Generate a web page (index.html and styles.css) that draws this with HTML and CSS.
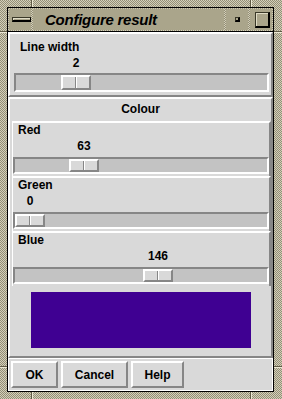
FILE: index.html
```html
<!DOCTYPE html>
<html lang="en">
<head>
  <meta charset="UTF-8">
  <title>Configure result</title>
<link rel="stylesheet" href="styles.css">
</head>
<body>
  <div class="notch notch-v" style="left:31px; top:0"></div>
  <div class="notch notch-v" style="left:250px; top:0"></div>
  <div class="notch notch-v" style="left:31px; top:392px"></div>
  <div class="notch notch-v" style="left:250px; top:392px"></div>
  <div class="notch notch-h" style="left:0; top:31px"></div>
  <div class="notch notch-h" style="left:0; top:366px"></div>
  <div class="notch notch-h notch-right" style="left:274px; top:31px"></div>
  <div class="notch notch-h notch-right" style="left:274px; top:366px"></div>

  <div class="window">
    <div class="titlebar">
      <div class="tb-btn menu-btn"><span class="menu-bar"></span></div>
      <div class="tb-title">Configure result</div>
      <div class="tb-btn min-btn"><span class="min-dot"></span></div>
      <div class="tb-btn max-btn"><span class="max-box"></span></div>
    </div>

    <div class="content">
      <div class="panel lw-panel">
        <div class="label">Line width</div>
        <div class="scale-value"><span style="margin-left:45px">2</span></div>
        <div class="trough"><div class="knob" style="margin-left:45px"></div></div>
      </div>

      <div class="panel colour-panel">
        <div class="panel-title">Colour</div>
        <div class="rows">
          <div class="row">
            <div class="label">Red</div>
            <div class="scale-value"><span style="margin-left:54px">63</span></div>
            <div class="trough"><div class="knob" style="margin-left:54px"></div></div>
          </div>
          <div class="row">
            <div class="label">Green</div>
            <div class="scale-value"><span style="margin-left:0px">0</span></div>
            <div class="trough"><div class="knob" style="margin-left:0px"></div></div>
          </div>
          <div class="row">
            <div class="label">Blue</div>
            <div class="scale-value"><span style="margin-left:128px">146</span></div>
            <div class="trough"><div class="knob" style="margin-left:128px"></div></div>
          </div>
        </div>
        <div class="swatch" style="background-color:#3f0092"></div>
      </div>

      <div class="buttons">
        <button class="btn btn-ok">OK</button>
        <button class="btn btn-cancel">Cancel</button>
        <button class="btn btn-help">Help</button>
      </div>
    </div>
  </div>
</body>
</html>
```

FILE: styles.css
```css
* {
  box-sizing: border-box;
}
html, body {
  margin: 0;
}
body {
  position: relative;
  width: 282px;
  height: 399px;
  padding: 7px 8px 7px 7px;
  background-color: #b2ad95;
  background-image: repeating-conic-gradient(#d3cfb9 0 25%, #938e76 0 50%);
  background-size: 2px 2px;
  font-family: "Liberation Sans", Arial, sans-serif;
  font-size: 12px;
  font-weight: bold;
  color: #000;
  overflow: hidden;
}

/* frame resize marks */
.notch {
  position: absolute;
}
.notch-v {
  width: 2px;
  height: 7px;
  border-left: 1px solid #5f5a45;
  border-right: 1px solid #ece8d4;
}
.notch-h {
  width: 7px;
  height: 2px;
  border-top: 1px solid #5f5a45;
  border-bottom: 1px solid #ece8d4;
}
.notch-right {
  width: 8px;
}

.window {
  height: 385px;
  border: 1px solid #000;
  display: flex;
  flex-direction: column;
}

/* title bar */
.titlebar {
  display: flex;
  gap: 2px;
  height: 24px;
  padding: 1px;
  border-bottom: 1px solid #000;
}
.tb-btn, .tb-title {
  background-color: #aaa58b;
  display: flex;
  align-items: center;
}
.tb-btn {
  width: 22px;
  justify-content: center;
}
.menu-btn {
  justify-content: flex-start;
  padding-left: 3px;
}
.menu-bar {
  width: 19px;
  height: 5px;
  border-style: solid;
  border-width: 1px 1px 2px 1px;
  border-color: #3a3828 #000 #000 #3a3828;
  box-shadow: inset 1px 1px 0 #e0dcc6;
}
.min-dot {
  width: 5px;
  height: 5px;
  border-style: solid;
  border-width: 1px 2px 2px 1px;
  border-color: #3a3828 #000 #000 #3a3828;
}
.max-btn {
  justify-content: flex-start;
  padding-left: 5px;
}
.max-box {
  width: 15px;
  height: 16px;
  border-style: solid;
  border-width: 1px 2px 2px 1px;
  border-color: #3a3828 #000 #000 #3a3828;
  box-shadow: inset 1px 1px 0 #e0dcc6;
}
.tb-title {
  flex: 1;
  padding-left: 12px;
  font-size: 15px;
  font-style: italic;
  line-height: 21px;
  letter-spacing: -0.25px;
}

/* dialog body */
.content {
  flex: 1;
  background-color: #d9d9d9;
  display: flex;
  flex-direction: column;
}
.panel {
  border: 2px solid;
  border-color: #fff #868686 #868686 #fff;
}
.label {
  line-height: 14px;
}
.scale-value {
  height: 14px;
  line-height: 14px;
  margin-top: 2px;
  padding-left: 2px;
  white-space: nowrap;
}
.scale-value span {
  display: inline-block;
  width: 30px;
  text-align: center;
}
.trough {
  display: flex;
  border: 2px solid;
  border-color: #868686 #fff #fff #868686;
  background-color: #c3c3c3;
}
.knob {
  width: 30px;
  flex-shrink: 0;
  border: 2px solid;
  border-color: #fff #868686 #868686 #fff;
  background-color: #d9d9d9;
  display: flex;
  justify-content: center;
}
.knob::before {
  content: "";
  border-left: 1px solid #868686;
  border-right: 1px solid #fff;
}

.lw-panel {
  height: 65px;
  padding: 6px 2px 0 4px;
}
.lw-panel .label {
  padding-left: 6px;
}
.lw-panel .trough {
  margin-top: 3px;
  height: 19px;
}

.colour-panel {
  height: 261px;
  padding-top: 3px;
}
.panel-title {
  text-align: center;
  line-height: 14px;
}
.rows {
  margin-top: 5px;
  margin-left: 2px;
}
.row {
  height: 55px;
  border-style: solid;
  border-width: 2px 2px 0 1px;
  border-color: #fff #868686 #fff #fff;
}
.row .label {
  padding-left: 5px;
}
.row .trough {
  margin-top: 4px;
  height: 17px;
}
.swatch {
  width: 220px;
  height: 56px;
  margin: 6px 0 0 21px;
}

/* buttons */
.buttons {
  height: 33px;
  border: 1px solid #fff;
  padding: 1px 0 0 1px;
  display: flex;
  gap: 3px;
}
.btn {
  height: 27px;
  padding: 0;
  margin-top: 1px;
  margin-left: 1px;
  font: inherit;
  color: #000;
  background-color: #d9d9d9;
  border: 2px solid;
  border-color: #fff #868686 #868686 #fff;
}
.btn + .btn {
  margin-left: 0;
}
.btn-ok {
  width: 47px;
}
.btn-cancel {
  width: 67px;
}
.btn-help {
  width: 53px;
}
```
